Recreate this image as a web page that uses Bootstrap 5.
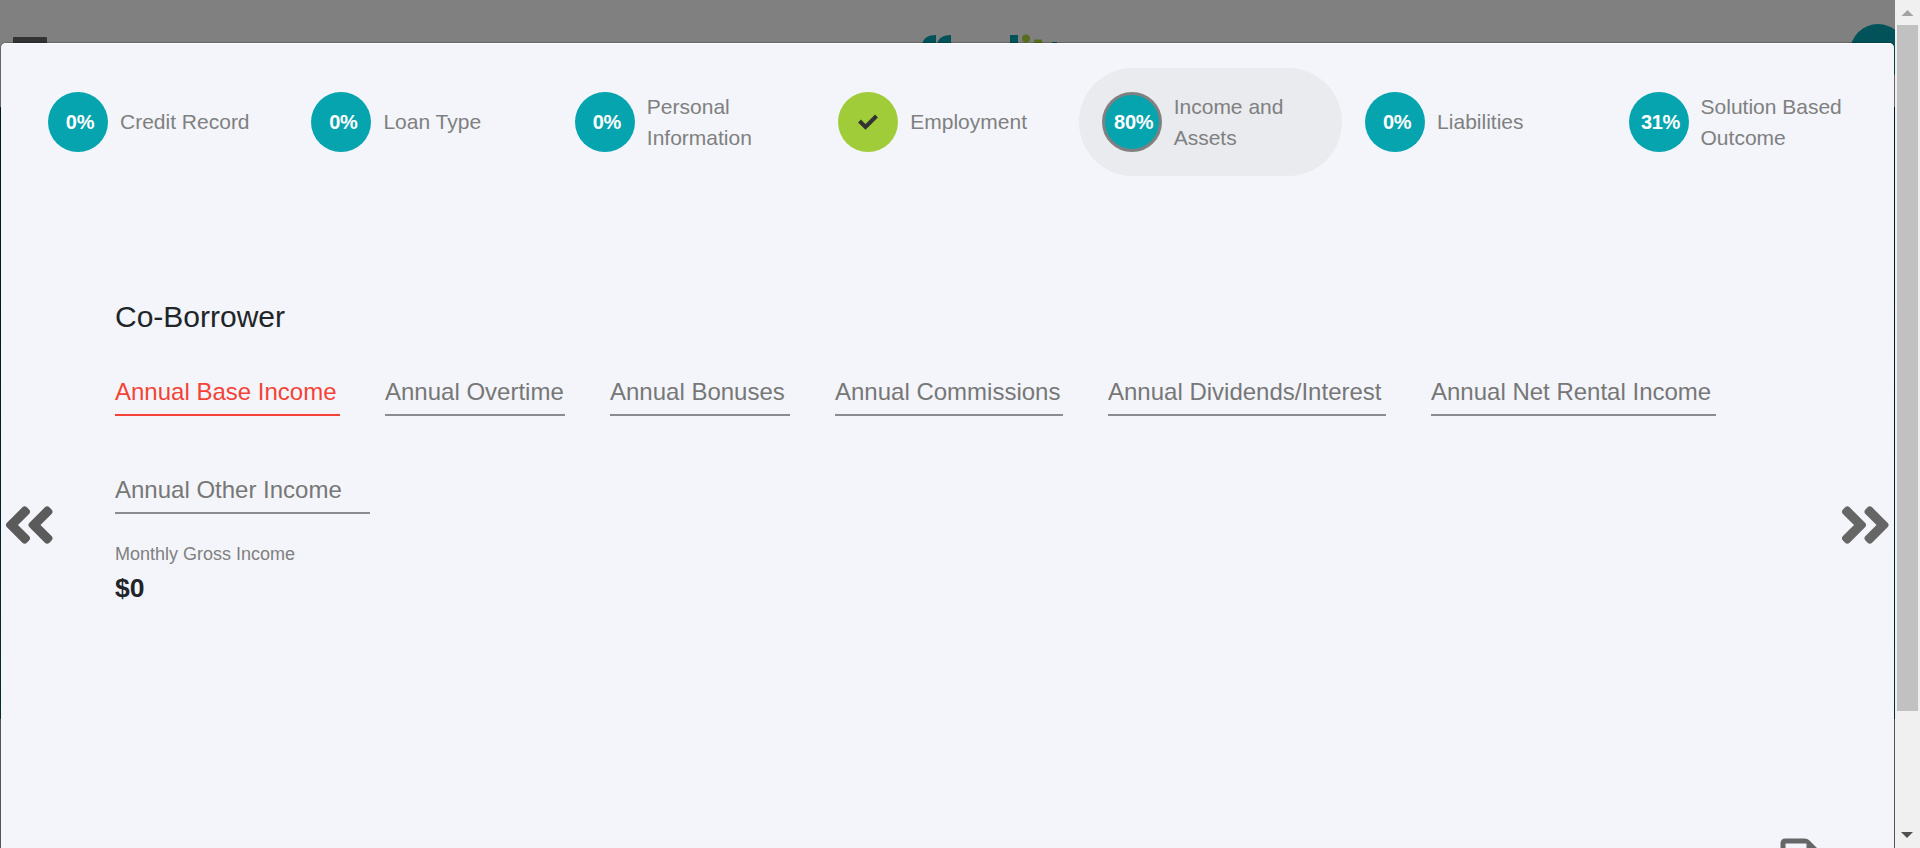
<!DOCTYPE html>
<html lang="en">
<head>
<meta charset="utf-8">
<meta name="viewport" content="width=device-width, initial-scale=1">
<title>Co-Borrower Income</title>
<link href="https://cdn.jsdelivr.net/npm/bootstrap@5.3.0/dist/css/bootstrap.min.css" rel="stylesheet">
<style>
body{font-family:"Liberation Sans",Arial,sans-serif;height:848px;background:linear-gradient(#808080 0 107px,#021f2a 107px 300px,#063a3c 719px,#6b6b6f 719px)}
.page-top{left:0;top:0;width:1895px;height:107px;overflow:hidden}
.menu-bar{left:13px;top:37px;width:34px;height:7px;background:#333;border-radius:1px}
.logo{left:916px;top:28px}
.avatar{left:1850px;top:24px;width:56px;height:56px;background:#02525a}
.sheet{margin:43px 0 0 1px;width:1893px;height:805px;background:#f3f5fa;border-radius:5px 5px 0 0;box-shadow:inset 0 1px #fff,0 0 0 1px rgba(0,0,0,.2);position:relative;overflow:hidden}
.steps{padding:25px 25px 0 24px}
.step{height:108px;padding-left:23px;gap:12px;color:gray;font-size:21px;line-height:31px;flex:1 1 0;min-width:0}
.step.current{background:#e9ebee;border-radius:54px}
.step-label{position:relative;top:-.5px}
.dot{width:60px;height:60px;background:#05a4af;color:#fff;font-weight:700;font-size:20px;line-height:30px;letter-spacing:-.3px;padding:0 0 1px 4px;flex:none}
.current .dot{border:3px solid gray}
.done .dot{background:#a0cc3a;padding:0}
.income{padding:123px 0 0 114px;width:1760px}
.income h2{font-size:30px;line-height:36px;color:#212529;margin:0 0 26px}
.fields{column-gap:45px;row-gap:43px}
.field{border-bottom:2px solid #8b8b90;height:55px;padding-top:15px;font-size:24px;line-height:32px;color:#777;white-space:nowrap}
.field.invalid{color:#f44336;border-color:#f44336}
.gross{margin-top:29px;font-size:18px;line-height:22px;color:#808080}
.total{font-size:26.5px;line-height:32px;margin-top:7px;color:#212529}
.arrow{top:452px;width:52.5px;height:60px;fill:#5b5b5b}
.save{left:1779px;top:795px}
.bar-track{right:0;top:0;width:25px;height:848px;background:#f0f0f0;padding-left:2px}
.thumb{width:21px;height:686px;background:#c1c1c1}
</style>
</head>
<body class="overflow-hidden">
<header class="page-top position-absolute">
  <div class="menu-bar position-absolute"></div>
  <svg class="logo position-absolute" width="150" height="20"><g fill="none" stroke="#02525a" stroke-width="8"><path d="M10 20v-1q0-8 10-8M25 20v-1q0-8 10-8"/></g><path fill="#02525a" d="M94 7h8v14h-8zM136 14h5v4h-5z"/><circle cx="110" cy="10.500" r="4" fill="#566e1e"/><path fill="#566e1e" d="M118 11.500h8v9h-8z"/></svg>
  <div class="avatar position-absolute rounded-circle"></div>
</header>
<main class="sheet">
  <nav class="steps d-flex">
    <div class="step d-flex align-items-center"><span class="dot rounded-circle d-flex align-items-center justify-content-center">0%</span><span class="step-label">Credit Record</span></div>
    <div class="step d-flex align-items-center"><span class="dot rounded-circle d-flex align-items-center justify-content-center">0%</span><span class="step-label">Loan Type</span></div>
    <div class="step d-flex align-items-center"><span class="dot rounded-circle d-flex align-items-center justify-content-center">0%</span><span>Personal<br>Information</span></div>
    <div class="step done d-flex align-items-center"><span class="dot rounded-circle d-flex align-items-center justify-content-center"><svg width="22" height="18" viewBox="0 0 22 18"><path d="M2.500 8l6 6L19.500 3" fill="none" stroke="#333" stroke-width="4"/></svg></span><span class="step-label">Employment</span></div>
    <div class="step current d-flex align-items-center"><span class="dot rounded-circle d-flex align-items-center justify-content-center">80%</span><span>Income and<br>Assets</span></div>
    <div class="step d-flex align-items-center"><span class="dot rounded-circle d-flex align-items-center justify-content-center">0%</span><span class="step-label">Liabilities</span></div>
    <div class="step d-flex align-items-center"><span class="dot rounded-circle d-flex align-items-center justify-content-center">31%</span><span>Solution Based<br>Outcome</span></div>
  </nav>
  <section class="income">
    <h2 class="fw-normal">Co-Borrower</h2>
    <div class="fields d-flex flex-wrap">
      <div class="field invalid" style="width:225px">Annual Base Income</div>
      <div class="field" style="width:180px">Annual Overtime</div>
      <div class="field" style="width:180px">Annual Bonuses</div>
      <div class="field" style="width:228px">Annual Commissions</div>
      <div class="field" style="width:278px">Annual Dividends/Interest</div>
      <div class="field" style="width:285px">Annual Net Rental Income</div>
      <div class="field" style="width:255px">Annual Other Income</div>
    </div>
    <div class="gross">Monthly Gross Income</div>
    <div class="total fw-bold">$0</div>
  </section>
  <svg class="arrow position-absolute" style="left:2px" viewBox="0 0 448 512"><path id="chev" d="M223.700 239l136-136c9.400-9.400 24.600-9.400 33.900 0l22.600 22.600c9.400 9.400 9.400 24.600 0 33.900L319.900 256l96.400 96.400c9.400 9.400 9.400 24.600 0 33.900L393.700 409c-9.400 9.400-24.600 9.400-33.900 0l-136-136c-9.500-9.400-9.500-24.600-.1-34zm-192 34l136 136c9.400 9.400 24.600 9.400 33.900 0l22.600-22.600c9.400-9.400 9.400-24.600 0-33.900L127.900 256l96.400-96.400c9.400-9.400 9.400-24.600 0-33.900L201.700 103c-9.400-9.400-24.600-9.400-33.900 0l-136 136c-9.500 9.400-9.500 24.600-.1 34z"/></svg>
  <svg class="arrow position-absolute" style="right:2.5px;fill:#666" viewBox="0 0 448 512"><use href="#chev" transform="translate(448) scale(-1 1)"/></svg>
  <svg class="save position-absolute" width="40" height="10"><path d="M.5 10V5.500q0-5 5-5h19q3 0 5 2l7.500 7.500H26.500V5.500H5.500V10z" fill="#666"/></svg>
</main>
<aside class="bar-track position-absolute">
  <svg class="d-block" width="21" height="25"><path d="M4.500 16l6-6 6 6z" fill="#a3a3a3"/></svg>
  <div class="thumb"></div>
  <svg class="d-block" width="21" height="137"><path d="M4 121h12l-6 6z" fill="#505050"/></svg>
</aside>
<script src="https://cdn.jsdelivr.net/npm/bootstrap@5.3.0/dist/js/bootstrap.bundle.min.js"></script>
</body>
</html>
